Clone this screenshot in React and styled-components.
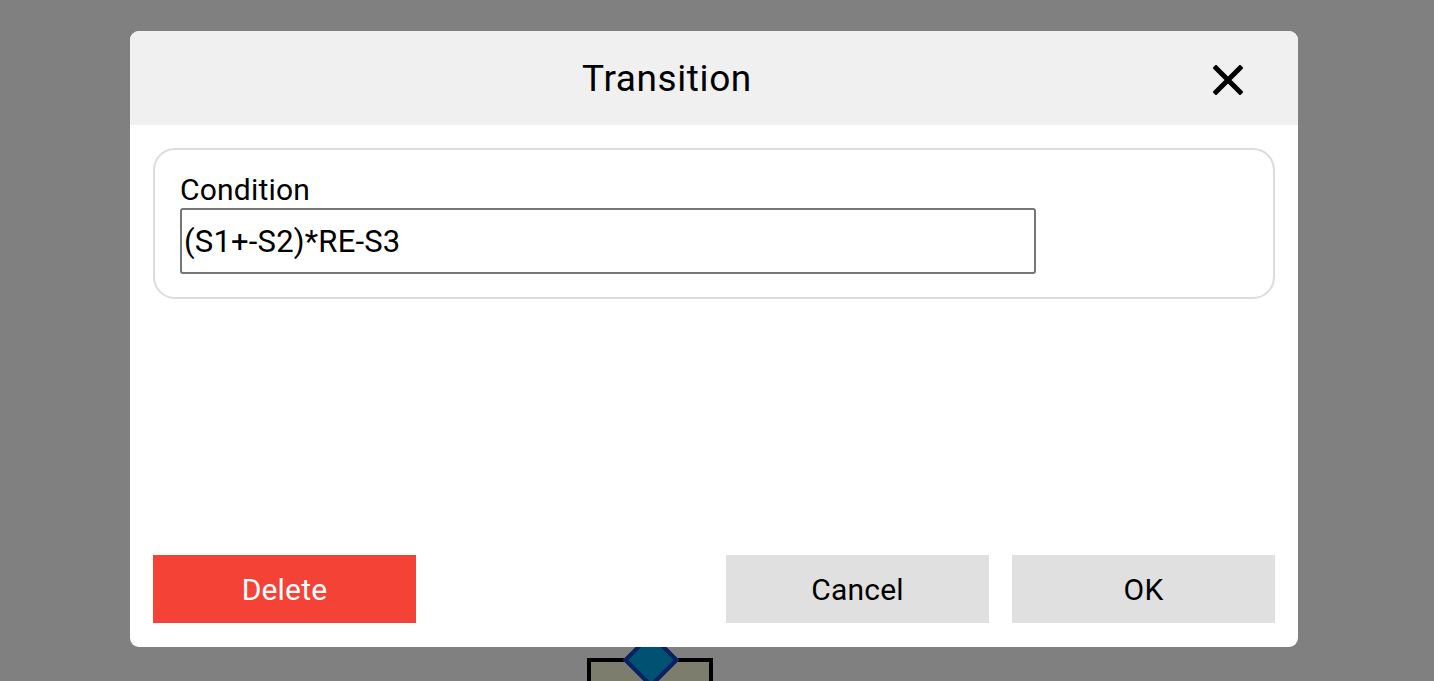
import React from "react";
import styled, { createGlobalStyle } from "styled-components";

const GlobalStyle = createGlobalStyle`
  html, body {
    margin: 0;
    padding: 0;
    background: #808080;
    font-family: Roboto, "Liberation Sans", sans-serif;
    overflow: hidden;
  }
`;

const Page = styled.div`
  position: relative;
  width: 1434px;
  height: 681px;
  background: #808080;
  overflow: hidden;
`;

const Node = styled.div`
  position: absolute;
  left: 587px;
  top: 658px;
  width: 118px;
  height: 60px;
  border: 4px solid #000;
  background: #7d7d6d;
`;

const Port = styled.div`
  position: absolute;
  left: 631px;
  top: 640px;
  width: 32px;
  height: 32px;
  transform: rotate(45deg);
  background: #005272;
  border: 4px solid #0c1f5e;
`;

const Dialog = styled.div`
  position: absolute;
  left: 130px;
  top: 31px;
  width: 1168px;
  height: 616px;
  background: #fff;
  border-radius: 9px;
  overflow: hidden;
  display: flex;
  flex-direction: column;
  z-index: 1;
`;

const Header = styled.div`
  height: 94px;
  flex: none;
  background: #f0f0f0;
  display: flex;
  align-items: center;
  padding-right: 46px;
`;

const Title = styled.h2`
  flex: 1;
  margin: 0 0 0;
  text-align: center;
  font-weight: 400;
  font-size: 37px;
  letter-spacing: 0.6px;
  color: #000;
`;

const Close = styled.button`
  width: 48px;
  height: 48px;
  padding: 0;
  margin-top: 4px;
  border: none;
  background: transparent;
  display: grid;
  place-items: center;
`;

const Body = styled.div`
  flex: 1;
  padding: 23px 23px 24px;
  display: flex;
  flex-direction: column;
`;

const Fieldset = styled.div`
  border: 2px solid #dcdcdc;
  border-radius: 22px;
  padding: 24px 25px 23px;
  display: flex;
  flex-direction: column;
  gap: 2px;
`;

const Label = styled.label`
  font-size: 30px;
  letter-spacing: 0.2px;
  color: #000;
  line-height: 32px;
`;

const Input = styled.input`
  width: 856px;
  height: 66px;
  box-sizing: border-box;
  border: 2px solid #767676;
  border-radius: 3px;
  padding: 0 2px;
  font-family: Roboto, "Liberation Sans", sans-serif;
  font-size: 31px;
  letter-spacing: 0.2px;
  color: #000;
  outline: none;
`;

const Spacer = styled.div`
  flex: 1;
`;

const Actions = styled.div`
  display: flex;
  gap: 23px;
`;

const Button = styled.button`
  width: 263px;
  height: 68px;
  border: none;
  border-radius: 0;
  font-family: Roboto, "Liberation Sans", sans-serif;
  font-size: 30px;
  letter-spacing: 0.2px;
  background: ${(p) => (p.$danger ? "#f44336" : "#e0e0e0")};
  color: ${(p) => (p.$danger ? "#fff" : "#000")};
  margin-right: ${(p) => (p.$danger ? "auto" : "0")};
`;

export default function App() {
  return (
    <Page>
      <GlobalStyle />
      <Node />
      <Port />
      <Dialog>
        <Header>
          <Title>Transition</Title>
          <Close aria-label="close">
            <svg width="30" height="30" viewBox="0 0 30 30">
              <path
                d="M3 3 L27 27 M27 3 L3 27"
                stroke="#000"
                strokeWidth="5"
                strokeLinecap="square"
              />
            </svg>
          </Close>
        </Header>
        <Body>
          <Fieldset>
            <Label>Condition</Label>
            <Input defaultValue="(S1+-S2)*RE-S3" />
          </Fieldset>
          <Spacer />
          <Actions>
            <Button $danger>Delete</Button>
            <Button>Cancel</Button>
            <Button>OK</Button>
          </Actions>
        </Body>
      </Dialog>
    </Page>
  );
}
